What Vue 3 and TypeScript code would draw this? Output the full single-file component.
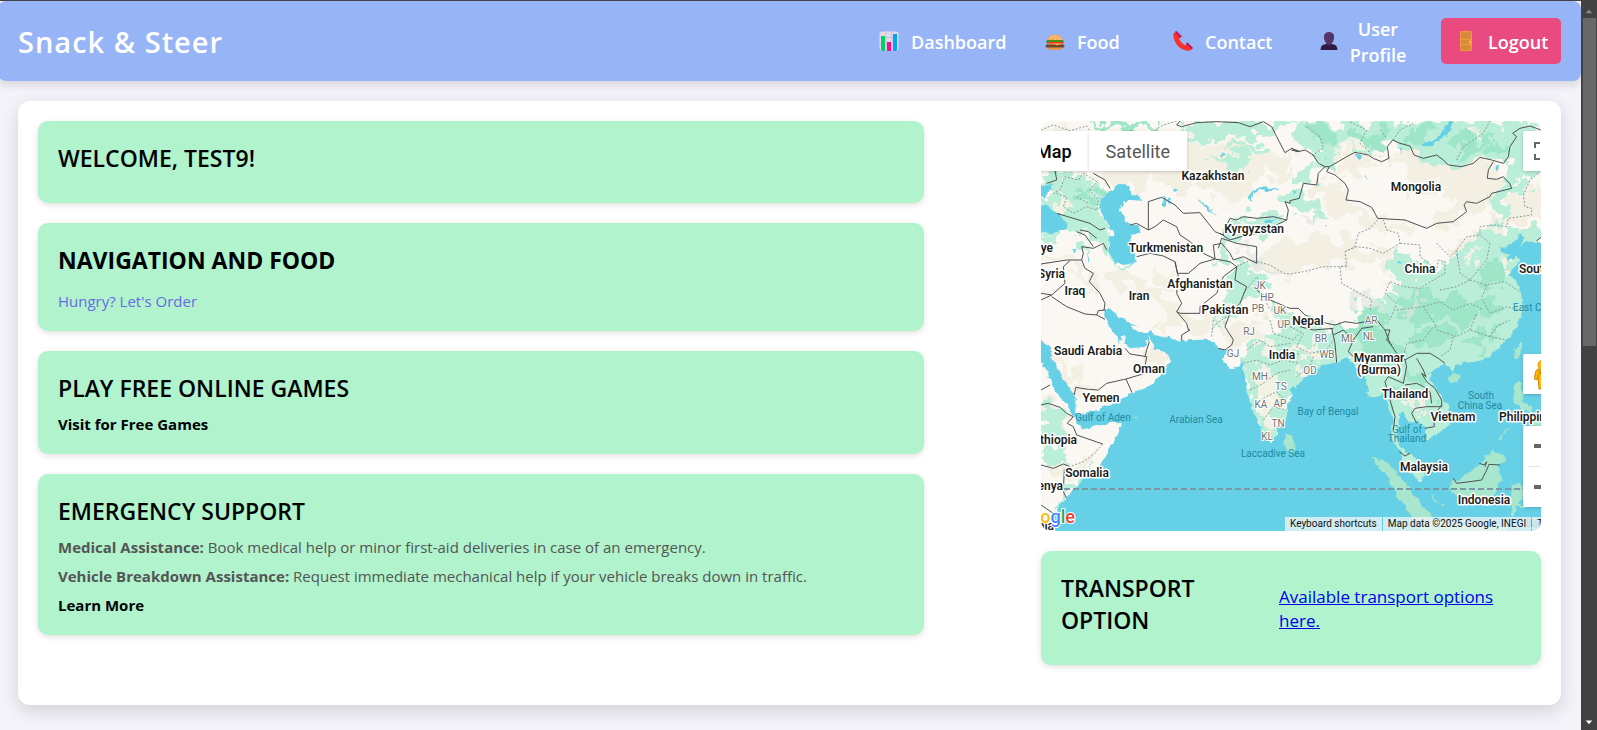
<script setup lang="ts">
type Label = { x: number; y: number; text: string; anchor?: 'start' | 'middle' | 'end' }

// Geography is stored per quadrant at three units per map pixel.
const quadrants: Record<string, [number, number]> = {
  nw: [-33, -33],
  ne: [747, -33],
  sw: [-33, 597],
  se: [747, 597],
}

function trace(source: string): string {
  let origin: [number, number] = [0, 0]
  let command = 'M'
  const out: string[] = []
  for (const token of source.trim().split(/\s+/)) {
    if (quadrants[token]) {
      origin = quadrants[token]
    } else if (token === '/') {
      command = 'M'
    } else {
      const [x, y] = token.split(',').map(Number)
      out.push(`${command}${x + origin[0]} ${y + origin[1]}`)
      command = 'L'
    }
  }
  return out.join('')
}

const steppe = [
  'nw 205,190 300,120 450,75 560,105 640,95 750,130 810,105 ne 20,100 0,130 -10,190 -60,200 nw 690,220 650,250 610,262 560,265 500,225 440,240 380,205 330,262 300,232 260,218 235,235',
  'ne 110,170 195,130 290,150 350,115 430,150 480,168 575,150 650,200 640,240 600,290 520,330 460,350 410,340 450,300 520,265 440,240 340,260 380,190 260,150 170,200 125,190',
  'ne 100,200 165,235 170,275 250,300 270,330 345,335 400,360 340,370 270,345 200,320 110,290 60,250',
  'nw 240,470 270,455 300,500 370,540 440,560 440,600 400,580 340,560 280,545 240,500',
  'nw 360,490 430,480 435,530 400,545 370,520',
  'nw 33,440 110,450 160,460 190,500 215,560 200,570 160,500 110,470 33,460',
  'sw 33,60 90,85 150,170 200,210 150,210 110,190 80,130',
  'sw 350,80 400,95 410,120 370,150 345,120',
  'sw 33,250 100,260 130,300 110,320 60,290 33,290',
  'sw 60,440 130,435 190,400 220,380 200,430 130,470 90,480',
  'sw 380,30 460,30 530,45 540,20 580,0 nw 600,620 540,600 470,615 410,590',
  'sw 600,0 720,10 760,60 690,60 620,90 590,80',
  'ne 0,395 110,370 170,400 300,420 330,450 290,480 200,455 90,470 0,490 nw 720,520 660,440',
  'ne 470,400 560,370 640,300 700,240 753,200 753,330 690,350 620,380 550,410 500,450 450,460',
]

const forest = [
  'nw 33,33 442,33 445,58 470,75 520,92 580,95 620,75 660,90 690,70 740,65 810,50 ne 20,100 60,130 110,165 150,130 195,125 240,128 285,118 300,92 350,110 400,150 470,165 520,172 580,145 610,150 640,160 660,200 720,185 753,180 753,33 442,33',
  'nw 33,140 70,185 33,185 / 33,190 65,185 100,172 130,190 110,210 160,215 205,235 215,262 203,290 225,330 250,370 240,420 200,415 160,370 100,372 33,385',
  'nw 232,438 280,462 340,456 310,480 270,478',
  'nw 555,415 575,395 590,352 640,320 690,315 770,322 760,345 700,368 640,385 600,392 590,440 560,455',
  'nw 600,500 625,462 660,475 690,530 740,575 810,625 sw 810,20 740,0 700,-60 680,-80 640,-50 590,-10 560,50 550,20 590,-60',
  'sw 700,25 740,20 810,10 se 20,-10 130,20 190,20 205,60 180,90 150,135 100,150 40,200 0,225 sw 770,250 750,230 700,160 660,140 650,90 690,70',
  'sw 636,120 672,140 690,210 680,270 705,310 735,350 730,370 705,360 670,290 640,190 / 738,285 775,230 775,310 740,325',
  'ne 205,640 215,590 260,565 325,545 300,495 310,440 370,455 440,480 500,430 560,400 590,345 635,335 660,375 753,350 753,680 se 753,100 520,360 430,490 300,400 190,240 170,120 130,70 150,20',
  'sw 33,262 90,275 110,340 90,380 115,425 75,440 33,420 / 115,505 150,465 200,435 110,545 75,605 70,570 100,540',
  'ne 0,250 50,270 120,320 60,318 0,290 / 0,180 40,165 100,155 60,195 20,220',
  'ne 600,280 650,190 720,200 700,250 660,260 640,320 / 310,415 380,440 400,470 340,455',
  'nw 530,150 640,130 690,160 640,180 570,165 / 590,110 700,100 700,130 620,125',
  'nw 240,345 240,400 232,440 200,430 180,380',
]

const deepForest = [
  'ne 60,40 120,45 150,90 110,120 70,80 / 180,50 240,70 290,60 280,120 220,110 190,80 / 330,60 400,40 440,60 400,90 350,90',
  'nw 170,38 400,40 370,62 330,50 300,70 / 200,240 210,290 175,280 150,240',
  'ne 500,60 600,90 570,120 520,130 470,100 / 610,70 670,100 640,130 590,120',
  'ne 330,590 380,520 440,560 500,540 560,600 520,650 430,620 370,660',
  'se 150,10 260,0 300,60 350,110 330,150 260,130 210,70 190,20',
  'se 330,150 400,155 430,210 455,250 430,240 400,190 350,190 / 290,200 340,210 330,250 300,260',
  'ne 560,480 620,450 650,500 590,540 / 540,570 600,560 640,600 570,620',
  'se 350,40 440,20 500,50 440,80 380,70 / 540,50 600,20 620,50 570,90',
  'ne 205,600 250,590 300,640 270,660 210,640',
]

const highland = [
  'nw 640,400 680,430 700,470 750,490 730,510 680,490 650,450',
  'ne 0,330 70,320 90,335 30,345 / 190,555 240,540 260,580 300,600 260,605 210,590',
  'ne 370,560 400,520 390,610 350,640',
]

const clearings = [
  'nw 70,250 110,262 130,300 90,300 / 160,200 190,190 200,225 170,220 / 70,45 110,70 90,85',
  'ne 130,125 190,100 240,98 230,112 150,135 / 310,120 345,130 330,150 / 500,60 560,50 540,75 / 10,40 60,50 40,60',
  'ne 620,480 680,440 690,455 650,490 / 515,490 550,430 560,450 / 290,500 310,530 270,520 / 370,480 400,500 375,505',
  'se 0,60 60,80 90,60 100,90 60,110 0,100 / 20,120 50,110 60,140 10,150 / 60,15 130,20 120,35',
  'se 350,240 400,240 410,255 360,262 / 375,270 400,268 395,290 / 40,30 60,25 70,40',
  'sw 680,150 760,170 750,230 690,220 / 690,240 740,250 740,330 710,330 685,280 / 700,40 730,60 720,100 690,90',
  'sw 570,0 600,20 580,60 565,40 / 590,60 620,70 610,90',
  'nw 620,340 680,335 700,350 640,360 / 560,130 610,140 590,150',
]

const seas = [
  'sw 60,650 75,620 75,590 85,555 110,535 150,490 215,430 250,370 270,325 272,305 235,310 200,318 160,328 140,310 132,290 120,265 95,240 70,200 55,165 45,140 10,110 10,60 33,60 60,85 70,120 95,165 115,200 133,225 137,265 142,284 165,278 200,270 245,250 300,222 340,205 370,190 390,165 410,140 420,115 410,100 375,88 363,70 358,48 345,80 300,85 282,70 280,45 272,45 270,75 262,50 235,10 nw 222,605 235,597 265,618 300,640 325,650 sw 300,15 320,35 352,38 366,28 372,45 450,62 540,58 560,80 590,95 580,125 600,145 625,140 637,120 645,170 650,215 675,290 697,330 705,358 725,362 740,345 745,320 770,305 772,250 790,230 se 0,210 30,190 60,165 100,135 140,128 165,115 190,125 200,140 225,160 235,200 232,230 255,232 280,222 290,240 300,270 310,310 302,340 312,370 330,395 345,430 370,465 395,485 400,465 395,435 370,410 350,400 330,380 320,350 326,318 325,280 345,275 350,300 385,310 405,325 410,345 412,360 440,340 470,325 488,300 480,265 460,235 440,205 418,180 425,155 445,140 462,130 480,142 488,158 495,138 530,130 580,120 620,90 650,60 680,20 ne 690,630 700,600 693,550 680,510 655,495 670,475 690,455 680,440 650,455 660,435 632,425 632,410 665,405 690,370 707,382 690,410 715,395 800,398 800,1400 -800,1400',
]

const lakes = [
  'nw 245,240 265,225 300,228 305,255 332,260 335,272 305,270 280,275 270,300 285,325 295,345 325,345 332,368 318,375 300,370 310,410 320,455 285,465 255,455 240,440 235,420 240,380 256,378 225,330 203,290 215,265',
  'nw 10,280 33,280 60,290 95,320 112,340 110,360 60,370 10,365 / 10,228 33,228 70,222 60,240 45,262 10,255',
  'nw 655,265 665,245 690,232 750,236 720,244 690,240 670,250 665,272 / 395,285 400,255 408,250 405,285 / 412,265 422,262 420,290 414,280',
  'ne 395,108 400,100 430,92 460,65 478,33 490,33 472,75 440,98 420,108 / 195,130 212,135 208,148 196,142 / 618,170 628,168 622,185 614,184 / 330,115 336,110 334,135',
  'nw 572,130 585,130 578,142 / 505,268 530,285 560,318 530,295 / 708,330 735,326 720,342 705,338 / 125,418 138,420 130,430 / 172,430 178,450 175,455 / 425,238 442,240 430,246',
  'ne 325,452 335,458 328,465 / 8,240 20,245 12,255 / 190,165 200,185 / 222,198 238,210 220,202 / 80,210 88,222 84,228 / 440,390 460,372 / 500,430 508,440 504,445 / 105,345 112,350 106,350',
]

const islands = [
  'se 247,412 290,425 340,480 375,530 400,560 425,575 430,650 400,632 370,600 330,540 300,480 265,440',
  'se 482,480 510,482 540,450 575,430 600,395 610,390 655,415 625,440 635,480 615,520 600,560 540,550 500,530 482,505',
  'se 475,170 495,157 512,165 500,187 482,185 / 672,90 690,65 700,75 685,118 675,110 / 672,195 685,183 697,195 695,240 725,260 735,280 700,270 670,250 / 625,360 660,320 655,330 630,362',
  'sw 765,340 780,345 797,375 790,395 770,392 763,370 / 313,288 324,288 324,294 313,294',
  'se 665,495 690,488 700,515 753,505 753,520 700,530 690,545 705,565 680,560 668,595 662,560 / 428,520 440,550 430,545 / 455,553 465,553 462,562 / 290,530 300,545 / 205,270 208,295 / 255,460 268,468 / 310,520 320,545',
  'se 410,600 520,615 600,612 650,622 650,640 400,640 / 675,265 690,275 / 725,310 753,300 753,340',
]

const borders = [
  'nw 450,33 440,45 455,50 500,38 560,35 625,38 660,50 700,35 725,50 740,80 765,128 785,115 810,125 ne 5,120 25,125 45,120 70,135 85,160 105,170 118,170 145,155 170,140 195,127 235,135 250,145 275,155 297,145 292,110 308,90 330,100 360,108 372,135 400,145 440,135 460,150 475,165 515,170 550,160 570,142 605,150 640,160 655,140 660,110 680,80 668,70 690,55 720,48 753,60',
  'ne 118,170 110,185 135,195 165,220 175,240 168,270 210,275 245,292 263,325 345,330 410,355 440,340 490,335 530,305 522,285 530,275 560,280 600,260 605,250 665,235 660,222 640,200 620,208 592,205 595,180 610,155',
  'ne 105,170 85,190 80,225 40,220 28,265 0,272 nw 780,280 765,275 775,300 770,330 730,320 680,325 640,320 620,330 600,325 590,345 580,375 555,365 535,340 510,308 460,310 435,285 395,262 355,275 355,360 320,340 300,345',
  'nw 355,360 375,350 400,330 440,350 450,375 480,395 520,430 555,447',
  'nw 33,462 110,450 155,450 160,430 155,410 190,415 200,410 220,400 230,420',
  'nw 155,450 165,475 190,490 178,515 210,550 225,580 222,600',
  'nw 33,570 65,555 105,520 100,470 120,452 / 65,555 33,550 / 65,560 110,590 165,612 200,615 225,628 / 200,615 205,602 228,600',
  'nw 80,310 130,325 180,340 210,360 225,355 / 140,365 165,375 190,410 / 150,360 175,365 200,385 / 190,190 225,210 240,235 / 50,220 80,210 75,180',
  'nw 320,440 360,430 400,438 435,455 442,490 475,490 510,460 555,447 600,455 620,470 580,500 560,550 510,590 510,610 450,610 440,605 455,580 440,550 445,500 435,455',
  'nw 440,605 470,640 475,660 sw 480,30 455,45 455,62 / nw 555,447 550,405 575,400 600,430 610,450 640,440 680,460 680,410 620,400 575,385 565,415 / 570,370 600,390 650,375 690,370 740,345 770,330',
  'nw 620,470 615,510 650,530 630,580 600,610 585,650 sw 610,60 605,75 585,90 565,85',
  'ne -100,540 -60,570 0,595 25,595 45,615 70,625 110,640 135,645 165,635 200,640 230,635 260,630 285,660 se 300,30 290,60 305,75',
  'se 125,25 135,70 140,128 / 130,45 160,30 190,60 215,25 250,20 / 190,60 175,95 195,115 / 30,20 70,30 130,25',
  'se 285,30 300,70 320,100 345,120 350,140 345,165 340,190 295,170 285,185 300,240 315,290 310,330 / 345,120 380,100 420,100 445,115 465,130 / 380,115 400,150 408,170 395,160 410,185 435,205 455,240 455,260 410,260 375,265 365,280 380,310 / 345,195 380,190 400,200 420,215 425,250 / 455,255 430,290 433,320 405,325',
  'sw 133,225 137,202 175,208 205,210 230,190 288,177 345,160 345,140 350,110 300,102 285,85 / 288,177 306,218 / 345,110 350,90 358,65 / 33,210 60,195',
  'sw 33,255 55,250 90,262 110,280 130,290 112,310 130,320 140,345 218,372 / 33,435 70,445 100,432 120,440 / 103,448 100,515 110,535 / 33,555 70,580',
  'se 328,395 345,408 360,400 / 490,475 500,490 540,485 575,480 590,450 597,433 630,435 / 568,430 582,435 590,425 585,440 / ne 740,393 753,382',
]

const provinces = [
  'nw 80,250 110,262 100,290 130,310 170,290 200,300 205,270 180,240 200,215 160,190 145,210 105,200 90,240 60,255 / 140,260 175,280',
  'nw 33,60 70,45 120,62 170,48 200,90 / 440,33 400,45 360,70 300,62',
  'ne 50,50 90,80 100,115 60,140 / 180,36 230,60 210,100 240,128 / 310,90 330,60 370,40 / 500,150 520,110 580,70 600,33 / 270,60 290,85',
  'ne 263,330 240,355 205,370 195,410 165,425 170,465 150,470 155,520 200,545 245,570 240,600 / 165,425 200,410 240,415 280,430 330,400 325,370 290,360 280,330',
  'nw 620,470 660,450 720,465 760,490 ne 0,492 40,485 100,470 170,470 / 330,400 390,405 390,440 440,480 445,450 465,455 465,490 430,510 390,535 340,530 300,515 285,550 320,580 300,630',
  'ne 440,400 480,440 500,420 530,380 570,375 570,350 610,345 650,350 655,325 725,315 725,295 705,290 700,255 720,210 750,185 / 500,420 510,490 540,510 590,450 600,400 570,375 / 540,510 590,525 645,515 690,545 / 590,525 575,565 600,610 650,590 690,600 / 450,540 500,530 540,510 / 400,590 450,575 490,600 540,580 580,600',
  'ne 320,600 400,590 440,650 se 430,20 400,60 350,70 340,110 / 440,30 500,50 540,30 600,50 650,60 / 490,50 480,90 450,110 / 540,30 560,-20 / 600,50 620,20 660,0',
  'sw 640,130 680,120 720,135 760,120 810,130 / 660,210 700,190 740,160 780,150 / 690,240 740,215 765,240 / 700,300 730,260 770,270 / 650,90 690,60 720,80 780,70 / 550,0 545,50 / 720,0 730,40 790,60 810,40',
  'se 0,20 40,40 20,80 60,100 110,90 130,60 / 0,110 30,100 / 70,110 60,140 20,170 / sw 218,372 195,400 160,425 120,440',
  'nw 640,550 680,500 700,540 / 620,590 590,620 560,640 545,660 / 700,560 720,600',
]

const countries: Label[] = [
  { x: 172, y: 59, text: 'Kazakhstan' },
  { x: 213, y: 112, text: 'Kyrgyzstan' },
  { x: 125, y: 131, text: 'Turkmenistan' },
  { x: 159, y: 167, text: 'Afghanistan' },
  { x: 184, y: 193, text: 'Pakistan' },
  { x: 34, y: 174, text: 'Iraq' },
  { x: 98, y: 179, text: 'Iran' },
  { x: 12, y: 131, text: 'Türkiye', anchor: 'end' },
  { x: 24, y: 157, text: 'Syria', anchor: 'end' },
  { x: 375, y: 70, text: 'Mongolia' },
  { x: 379, y: 152, text: 'China' },
  { x: 267, y: 204, text: 'Nepal' },
  { x: 478, y: 152, text: 'South Korea', anchor: 'start' },
  { x: 47, y: 234, text: 'Saudi Arabia' },
  { x: 108, y: 252, text: 'Oman' },
  { x: 60, y: 281, text: 'Yemen' },
  { x: 36, y: 323, text: 'Ethiopia', anchor: 'end' },
  { x: 46, y: 356, text: 'Somalia' },
  { x: 22, y: 369, text: 'Kenya', anchor: 'end' },
  { x: 13, y: 409, text: 'Tanzania', anchor: 'end' },
  { x: 241, y: 238, text: 'India' },
  { x: 338, y: 241, text: 'Myanmar' },
  { x: 338, y: 253, text: '(Burma)' },
  { x: 364, y: 277, text: 'Thailand' },
  { x: 412, y: 300, text: 'Vietnam' },
  { x: 458, y: 300, text: 'Philippines', anchor: 'start' },
  { x: 383, y: 350, text: 'Malaysia' },
  { x: 443, y: 383, text: 'Indonesia' },
]

const regions: Label[] = [
  { x: 219, y: 168, text: 'JK' },
  { x: 226, y: 180, text: 'HP' },
  { x: 217, y: 191, text: 'PB' },
  { x: 239, y: 193, text: 'UK' },
  { x: 243, y: 207, text: 'UP' },
  { x: 208, y: 214, text: 'RJ' },
  { x: 192, y: 236, text: 'GJ' },
  { x: 219, y: 259, text: 'MH' },
  { x: 240, y: 269, text: 'TS' },
  { x: 220, y: 287, text: 'KA' },
  { x: 239, y: 286, text: 'AP' },
  { x: 237, y: 306, text: 'TN' },
  { x: 226, y: 319, text: 'KL' },
  { x: 330, y: 203, text: 'AR' },
  { x: 280, y: 221, text: 'BR' },
  { x: 307, y: 221, text: 'ML' },
  { x: 328, y: 219, text: 'NL' },
  { x: 286, y: 237, text: 'WB' },
  { x: 269, y: 253, text: 'OD' },
]

const waters: Label[] = [
  { x: 62, y: 300, text: 'Gulf of Aden' },
  { x: 155, y: 302, text: 'Arabian Sea' },
  { x: 287, y: 294, text: 'Bay of Bengal' },
  { x: 232, y: 336, text: 'Laccadive Sea' },
  { x: 366, y: 312, text: 'Gulf of' },
  { x: 366, y: 321, text: 'Thailand' },
  { x: 440, y: 278, text: 'South' },
  { x: 439, y: 288, text: 'China Sea' },
  { x: 472, y: 190, text: 'East China Sea', anchor: 'start' },
  { x: 485, y: 406, text: 'Banda Sea', anchor: 'start' },
]
</script>

<template>
  <div class="window">
    <div class="page">
      <header class="topbar">
        <h1 class="brand">Snack &amp; Steer</h1>
        <nav class="nav" aria-label="Main">
          <a class="nav-link" href="#dashboard">
            <svg class="icon" viewBox="0 0 20 20" aria-hidden="true">
              <rect x=".5" y=".5" width="19" height="19" rx="3" fill="#e2d8ea" />
              <path d="M7 1v18M13 1v18M1 6.500h18M1 13h18" stroke="#c5b7d3" stroke-width=".8" />
              <path d="M2 5h4v15H3.500Q2 20 2 18z" fill="#00d26a" />
              <path d="M8 11h4v9H8z" fill="#fc0a8c" />
              <path d="M14 3h4v15q0 2-1.500 2H14z" fill="#00a6ed" />
            </svg>
            <span>Dashboard</span>
          </a>
          <a class="nav-link" href="#food">
            <svg class="icon" viewBox="0 0 20 20" aria-hidden="true">
              <path d="M2 9.500Q3 3.500 10 3.500T18 9.500z" fill="#f3ad61" />
              <path d="M2 15h16q0 4-4 4H6q-4 0-4-4" fill="#e19747" />
              <path d="M1 10.500q0-1.500 2-1.500h14q2 0 2 1.500T17 12H3q-2 0-2-1.500" fill="#44911b" />
              <path d="M2 11h16v2H2z" fill="#f8312f" />
              <path d="M2 12.500h16l-4 1.500-3-.5L8 15l-3-1.500z" fill="#ffb02e" />
              <rect x=".5" y="13.500" width="19" height="3" rx="1.500" fill="#6d4534" />
              <path d="M9 12.500h7l-4 2z" fill="#ffb02e" />
              <path d="M6 6.500h1M9 5h1M12 6.500h1M10 8h1M13.500 8h1" stroke="#fff0c8" />
            </svg>
            <span>Food</span>
          </a>
          <a class="nav-link" href="#contact">
            <svg class="icon" viewBox="0 0 20 20" aria-hidden="true">
              <path d="M.5 2.500 3 .5l5 5-2 2.500q2 4 6 6.500l2-2 6 5q-3 3-7 2Q5 18 1.500 9.500 0 5 .5 2.500" fill="#f8312f" />
              <path d="M2 .5 3.500 0l5 5.500L7 7zM13 12.500l1.500-1 5.500 5-1 1.500z" fill="#ca0b4a" />
              <path d="M3.500 0 9 5.500 8 6.500M14.500 11.500 20 17l-1 1" fill="none" stroke="#8d65c5" />
            </svg>
            <span>Contact</span>
          </a>
          <a class="nav-link profile" href="#profile">
            <svg class="icon" viewBox="0 0 20 20" aria-hidden="true">
              <path d="M7.500 11h5v4h-5z" fill="#462960" />
              <path d="M5 4.500Q6 1 10 1t5 3.500v3Q14 13 10 13T5 7.500z" fill="#533566" />
              <path d="M1.500 19q0-6 6-6l2.500 2 2.500-2q6 0 6 6z" fill="#321b41" />
            </svg>
            <span>User Profile</span>
          </a>
          <button class="nav-link logout" type="button">
            <svg class="icon door" viewBox="0 0 12 20" aria-hidden="true">
              <rect width="12" height="20" rx="1.500" fill="#f09a39" />
              <path d="M1.500 1.500h9v6h-9zM1.500 9.500h7v3h-7zM1.500 14.500h9v4h-9z" fill="#d3883e" stroke="#d3883e" stroke-width=".6" />
              <circle cx="10" cy="11" r="1" fill="#f9c23c" />
            </svg>
            <span>Logout</span>
          </button>
        </nav>
      </header>

      <main class="board">
        <div class="column">
          <section class="card"><h2>WELCOME, TEST9!</h2></section>
          <section class="card">
            <h2 class="strong">NAVIGATION AND FOOD</h2>
            <p class="order"><a href="#order">Hungry? Let's Order</a></p>
          </section>
          <section class="card">
            <h2>PLAY FREE ONLINE GAMES</h2>
            <p><a class="action" href="#games">Visit for Free Games</a></p>
          </section>
          <section class="card">
            <h2>EMERGENCY SUPPORT</h2>
            <p><strong>Medical Assistance:</strong> Book medical help or minor first-aid deliveries in case of an emergency.</p>
            <p><strong>Vehicle Breakdown Assistance:</strong> Request immediate mechanical help if your vehicle breaks down in traffic.</p>
            <p><a class="action" href="#emergency">Learn More</a></p>
          </section>
        </div>

        <div class="column side">
          <section class="map" aria-label="Map">
            <svg class="chart" viewBox="0 0 500 410" preserveAspectRatio="xMidYMid slice" role="img" aria-label="Map of Asia">
              <defs>
                <filter id="terrain" x="0" y="0" width="1500" height="1230" filterUnits="userSpaceOnUse" color-interpolation-filters="sRGB">
                  <feTurbulence type="fractalNoise" baseFrequency=".02" numOctaves="4" seed="4" />
                  <feDisplacementMap in="SourceGraphic" scale="110" xChannelSelector="R" yChannelSelector="G" />
                </filter>
                <filter id="coast" x="0" y="0" width="1500" height="1230" filterUnits="userSpaceOnUse" color-interpolation-filters="sRGB">
                  <feTurbulence type="fractalNoise" baseFrequency=".05" numOctaves="2" seed="7" />
                  <feDisplacementMap in="SourceGraphic" scale="18" xChannelSelector="R" yChannelSelector="G" />
                </filter>
              </defs>
              <rect width="500" height="410" fill="#fbf8f3" />
              <g transform="scale(.33333)">
                <g filter="url(#terrain)">
                  <path v-for="d in steppe" :key="d" :d="trace(d)" fill="#f3f0e3" />
                  <path v-for="d in forest" :key="d" :d="trace(d)" fill="#bbeed9" />
                  <path v-for="d in deepForest" :key="d" :d="trace(d)" fill="#9fe5c8" />
                  <path v-for="d in clearings" :key="d" :d="trace(d)" fill="#f1f1e4" />
                  <path v-for="d in highland" :key="d" :d="trace(d)" fill="#dfe5e2" opacity=".7" />
                </g>
                <g filter="url(#coast)">
                  <path v-for="d in seas" :key="d" :d="trace(d)" fill="#66d0e7" />
                  <path v-for="d in lakes" :key="d" :d="trace(d)" fill="#66d0e7" />
                  <path v-for="d in islands" :key="d" :d="trace(d)" fill="#a8e7cd" />
                </g>
                <path v-for="d in provinces" :key="d" :d="trace(d)" class="province" />
                <path v-for="d in borders" :key="d" :d="trace(d)" class="border" />
              </g>
              <path d="M23 368H500" stroke="#7b98a5" stroke-width="2" stroke-dasharray="6 3" />
              <g class="waters">
                <text v-for="l in waters" :key="l.text" :x="l.x" :y="l.y" :text-anchor="l.anchor ?? 'middle'">{{ l.text }}</text>
              </g>
              <g class="regions">
                <text v-for="l in regions" :key="l.text" :x="l.x" :y="l.y" text-anchor="middle">{{ l.text }}</text>
              </g>
              <g class="countries">
                <text v-for="l in countries" :key="l.text" :x="l.x" :y="l.y" :text-anchor="l.anchor ?? 'middle'">{{ l.text }}</text>
              </g>
              <text class="logo" x="34" y="402" text-anchor="end"><tspan fill="#4285f4">G</tspan><tspan fill="#ea4335">o</tspan><tspan fill="#fbbc04">o</tspan><tspan fill="#4285f4">g</tspan><tspan fill="#34a853">l</tspan><tspan fill="#ea4335">e</tspan></text>
            </svg>
            <div class="modes">
              <button class="mode selected" type="button">Map</button>
              <button class="mode" type="button">Satellite</button>
            </div>
            <button class="control fullscreen" type="button" aria-label="Toggle fullscreen view">
              <svg viewBox="0 0 40 40" aria-hidden="true"><path d="M17 12h-5v5M12 23v5h5M23 12h5v5M28 23v5h-5" fill="none" stroke="#666" stroke-width="2" /></svg>
            </button>
            <button class="control pegman" type="button" aria-label="Street View">
              <svg viewBox="0 0 40 40" aria-hidden="true">
                <path d="M15 15h10q3 1 3.500 9l-2.500 1-1-4-1 14h-8l-1-14-1 5-2.500-1Q12 16 15 15" fill="#fbbc04" stroke="#d98200" />
                <circle cx="20" cy="11" r="5" fill="#fbbc04" stroke="#e19a00" />
                <path d="M15.500 16q4 3 9 0v4q-5 2-9 0z" fill="#e58b00" />
              </svg>
            </button>
            <div class="zoom">
              <button class="control" type="button" aria-label="Zoom in">
                <svg viewBox="0 0 40 40" aria-hidden="true"><path d="M11 20h18M20 11v18" stroke="#666" stroke-width="4" /></svg>
              </button>
              <hr />
              <button class="control" type="button" aria-label="Zoom out">
                <svg viewBox="0 0 40 40" aria-hidden="true"><path d="M11 20h18" stroke="#666" stroke-width="4" /></svg>
              </button>
            </div>
            <div class="credits">
              <button type="button">Keyboard shortcuts</button>
              <span>Map data ©2025 Google, INEGI</span>
              <a href="#terms">Terms</a>
            </div>
          </section>

          <section class="card transport">
            <h2>TRANSPORT OPTION</h2>
            <a href="#transport">Available transport options here.</a>
          </section>
        </div>
      </main>
    </div>

    <div class="scrollbar" aria-hidden="true">
      <svg viewBox="0 0 16 16"><path d="M5 12h7L8.500 8z" fill="#8b8b8b" /></svg>
      <span class="thumb"></span>
      <svg viewBox="0 0 16 16"><path d="M5 7h7l-3.500 4z" fill="#fff" /></svg>
    </div>
  </div>
</template>

<style>
body {
  margin: 0;
  overflow: hidden;
}
</style>

<style scoped>
* {
  box-sizing: border-box;
}

.window {
  display: grid;
  grid-template-columns: minmax(0, 1fr) 16px;
  height: 100vh;
  overflow: hidden;
  border-top: 1px solid #424242;
  background: #f3f3f9;
  color: #000;
  font-family: "Segoe UI", "Open Sans", "Noto Sans", sans-serif;
}

.page {
  min-width: 0;
  margin-left: -2px;
}

.topbar {
  display: flex;
  align-items: center;
  justify-content: space-between;
  height: 80px;
  padding: 0 20px;
  border-radius: 8px;
  background: #97b5f6;
  box-shadow: 0 4px 10px rgba(0, 0, 0, 0.12);
}

.brand {
  margin: 0;
  padding-top: 2px;
  color: #fff;
  font-size: 29px;
  font-weight: 600;
  line-height: 40px;
  letter-spacing: 1px;
}

.nav {
  display: grid;
  grid-template-columns: 166px 128px 146px 122px 120px;
  align-items: center;
}

.nav-link {
  display: flex;
  align-items: center;
  gap: 12px;
  color: #fff;
  font-family: inherit;
  font-size: 18px;
  font-weight: 600;
  line-height: 26px;
  text-decoration: none;
}

.nav-link span {
  padding-top: 2px;
}

.profile {
  padding-right: 32px;
  gap: 8px;
  text-align: center;
}

.profile span {
  flex: 1;
}

.logout {
  height: 46px;
  padding: 0 12px 0 19px;
  gap: 16px;
  border: 0;
  border-radius: 5px;
  background: #e94a80;
}

.icon {
  flex: none;
  width: 20px;
  height: 20px;
}

.door {
  width: 12px;
}

.board {
  display: grid;
  grid-template-columns: minmax(0, 886fr) minmax(0, 500fr);
  gap: 117px;
  margin: 20px;
  padding: 20px 20px 40px;
  border-radius: 12px;
  background: #fff;
  box-shadow: 0 6px 18px rgba(0, 0, 0, 0.14);
}

.column {
  display: flex;
  flex-direction: column;
  gap: 20px;
  min-width: 0;
}

.card {
  padding: 21px 20px 19px;
  border-radius: 10px;
  background: #b0f3cc;
  box-shadow: 0 2px 6px rgba(0, 0, 0, 0.12);
}

.card h2 {
  margin: 0 0 10px;
  font-size: 23px;
  font-weight: 600;
  line-height: 32px;
}

.card h2.strong {
  font-weight: 700;
}

.card p {
  margin: 0;
  color: #555;
  font-size: 15px;
  line-height: 21px;
}

.card p + p {
  margin-top: 8px;
}

.card .order {
  margin-top: 15px;
}

.order a {
  color: #6a6ae4;
  text-decoration: none;
}

.action {
  color: #000;
  font-weight: 700;
  text-decoration: none;
}

.transport {
  display: grid;
  grid-template-columns: 176fr 242fr;
  align-items: center;
  column-gap: 42px;
}

.transport a {
  color: #00e;
  font-size: 17px;
  line-height: 24px;
}

.map {
  position: relative;
  aspect-ratio: 500 / 410;
  overflow: hidden;
  border-radius: 10px;
  font-family: Roboto, sans-serif;
}

.chart {
  display: block;
  width: 100%;
  height: 100%;
}

.border,
.province {
  fill: none;
  stroke-linejoin: round;
}

.border {
  stroke: #4c5053;
  stroke-width: 3;
}

.province {
  stroke: #879b97;
  stroke-width: 3;
  stroke-dasharray: 6 5;
}

.chart text {
  font-family: Roboto, sans-serif;
  paint-order: stroke;
  stroke-linejoin: round;
}

.countries text {
  fill: #1b1d20;
  stroke: #fff;
  stroke-width: 3px;
  font-size: 12px;
  font-weight: 600;
}

.regions text {
  fill: #6c7276;
  stroke: #fff;
  stroke-width: 2px;
  font-size: 10px;
}

.waters text {
  fill: #218aa3;
  font-size: 10px;
}

.chart .logo {
  stroke: #fff;
  stroke-width: 2px;
  font-size: 18px;
  font-weight: 500;
}

.modes {
  position: absolute;
  top: 10px;
  left: -22px;
  display: flex;
}

.mode {
  height: 40px;
  padding: 0 17px;
  border: 0;
  background: #fff;
  box-shadow: 0 1px 4px -1px rgba(0, 0, 0, 0.3);
  color: #565656;
  font: 400 18px Roboto, sans-serif;
}

.mode.selected {
  color: #000;
  font-weight: 500;
}

.control {
  display: block;
  width: 40px;
  height: 40px;
  padding: 0;
  border: 0;
  border-radius: 2px;
  background: #fff;
}

.control svg {
  display: block;
}

.fullscreen,
.pegman,
.zoom {
  position: absolute;
  right: -22px;
  box-shadow: 0 1px 4px -1px rgba(0, 0, 0, 0.3);
}

.fullscreen {
  top: 10px;
}

.pegman {
  bottom: 137px;
}

.zoom {
  bottom: 24px;
  background: #fff;
  border-radius: 2px;
}

.zoom hr {
  height: 1px;
  margin: 0 5px;
  border: 0;
  background: #e6e6e6;
}

.credits {
  position: absolute;
  bottom: 0;
  left: 244px;
  display: flex;
  gap: 1px;
  color: #111;
  font-size: 10px;
  line-height: 14px;
  white-space: nowrap;
}

.credits > * {
  padding: 0 5px;
  border: 0;
  background: rgba(245, 245, 245, 0.75);
  color: inherit;
  font: inherit;
  text-decoration: none;
}

.scrollbar {
  display: flex;
  flex-direction: column;
  align-items: flex-end;
  padding-right: 1px;
  background: #424242;
}

.scrollbar svg {
  flex: none;
  width: 15px;
  height: 17px;
}

.thumb {
  width: 13px;
  height: 45%;
  margin-bottom: auto;
  background: #686868;
}
</style>
